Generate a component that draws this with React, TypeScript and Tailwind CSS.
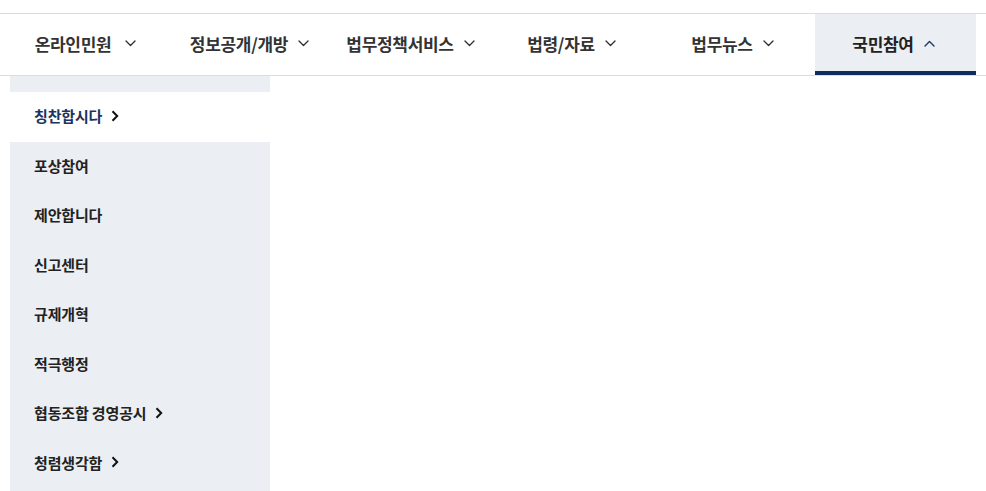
import React from "react";

const tabs = [
  { label: "온라인민원", spaced: true },
  { label: "정보공개/개방" },
  { label: "법무정책서비스" },
  { label: "법령/자료" },
  { label: "법무뉴스" },
  { label: "국민참여", active: true },
];

const items = [
  { label: "칭찬합시다", arrow: true, active: true },
  { label: "포상참여" },
  { label: "제안합니다" },
  { label: "신고센터" },
  { label: "규제개혁" },
  { label: "적극행정" },
  { label: "협동조합 경영공시", arrow: true },
  { label: "청렴생각함", arrow: true },
];

function Down({ up, active }: { up?: boolean; active?: boolean }) {
  return (
    <svg width="11" height="7" viewBox="0 0 11 7" fill="none" className={active ? "text-[#1b3461]" : "text-[#333]"}>
      <path
        d={up ? "M1 6 L5.5 1.5 L10 6" : "M1 1 L5.5 5.5 L10 1"}
        stroke="currentColor"
        strokeWidth="1.4"
        strokeLinecap="round"
        strokeLinejoin="round"
      />
    </svg>
  );
}

function Right() {
  return (
    <svg width="8" height="12" viewBox="0 0 8 12" fill="none">
      <path d="M1.5 1.2 L6.2 6 L1.5 10.8" stroke="#111" strokeWidth="2" strokeLinejoin="miter" />
    </svg>
  );
}

export default function App() {
  return (
    <div
      className="w-[986px] h-[491px] bg-white overflow-hidden"
      style={{ fontFamily: '"Noto Sans CJK KR", "Noto Sans", sans-serif' }}
    >
      <div className="h-[13px]" />
      <nav className="border-t border-b border-[#dcdcdc] pl-[10px] flex h-[63px]">
        {tabs.map((t) => (
          <div
            key={t.label}
            className={
              "w-[161px] h-[61px] flex items-center justify-center " +
              (t.active ? "bg-[#ebeef3] border-b-4 border-[#0d2d5e] pt-[2px]" : "pb-[2px]")
            }
          >
            <span
              className={
                "text-[17px] font-bold tracking-[-0.3px] leading-none " +
                (t.active ? "text-[#222]" : "text-[#333]")
              }
            >
              {t.label}
            </span>
            <span className={t.spaced ? "ml-[14px] mr-[10px]" : "ml-[10px] mr-[4px]"}>
              <Down up={t.active} active={t.active} />
            </span>
          </div>
        ))}
      </nav>
      <div className="ml-[10px] w-[260px] bg-[#ebeef3] pt-[16px] h-[415px]">
        {items.map((it) => (
          <div
            key={it.label}
            className={
              "h-[49.5px] flex items-center pl-[24px] pb-[2px] " + (it.active ? "bg-white" : "")
            }
          >
            <span
              className={
                "text-[15px] font-bold tracking-[-0.15px] leading-none " +
                (it.active ? "text-[#1b3461]" : "text-[#222]")
              }
            >
              {it.label}
            </span>
            {it.arrow && (
              <span className="ml-[9px] flex items-center">
                <Right />
              </span>
            )}
          </div>
        ))}
      </div>
    </div>
  );
}
